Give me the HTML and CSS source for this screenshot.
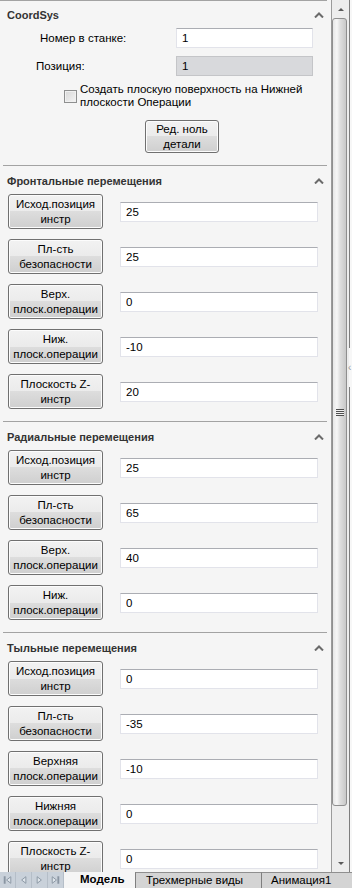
FILE: index.html
```html
<!DOCTYPE html>
<html lang="ru">
  <head>
    <meta charset="UTF-8" />
    <meta name="viewport" content="width=device-width, initial-scale=1.0" />
    <title>CoordSys</title>
    <link rel="stylesheet" href="styles.css">
  </head>
  <body>
    <div class="window">
      <div class="workspace">
        <div class="panel">
          <section class="group coord">
            <header class="group-head">
              <span>CoordSys</span>
              <svg class="chev" width="10" height="6" viewBox="0 0 10 6"><polyline points="1,5.5 5,1.5 9,5.5" /></svg>
            </header>
            <div class="field">
              <span class="field-label num">Номер в станке:</span>
              <input class="text" type="text" value="1" />
            </div>
            <div class="field">
              <span class="field-label pos">Позиция:</span>
              <input class="text" type="text" value="1" disabled />
            </div>
            <label class="check">
              <span class="box"></span>
              <span>Создать плоскую поверхность на Нижней<br />плоскости Операции</span>
            </label>
            <button type="button" class="btn zero">Ред. ноль<br />детали</button>
          </section>

          <section class="group">
            <header class="group-head">
              <span>Фронтальные перемещения</span>
              <svg class="chev" width="10" height="6" viewBox="0 0 10 6"><polyline points="1,5.5 5,1.5 9,5.5" /></svg>
            </header>
            <div class="row">
              <button type="button" class="btn">Исход.позиция<br />инстр</button>
              <input class="text" type="text" value="25" />
            </div>
            <div class="row">
              <button type="button" class="btn">Пл-сть<br />безопасности</button>
              <input class="text" type="text" value="25" />
            </div>
            <div class="row">
              <button type="button" class="btn">Верх.<br />плоск.операции</button>
              <input class="text" type="text" value="0" />
            </div>
            <div class="row">
              <button type="button" class="btn">Ниж.<br />плоск.операции</button>
              <input class="text" type="text" value="-10" />
            </div>
            <div class="row">
              <button type="button" class="btn">Плоскость Z-<br />инстр</button>
              <input class="text" type="text" value="20" />
            </div>
          </section>

          <section class="group">
            <header class="group-head">
              <span>Радиальные перемещения</span>
              <svg class="chev" width="10" height="6" viewBox="0 0 10 6"><polyline points="1,5.5 5,1.5 9,5.5" /></svg>
            </header>
            <div class="row">
              <button type="button" class="btn">Исход.позиция<br />инстр</button>
              <input class="text" type="text" value="25" />
            </div>
            <div class="row">
              <button type="button" class="btn">Пл-сть<br />безопасности</button>
              <input class="text" type="text" value="65" />
            </div>
            <div class="row">
              <button type="button" class="btn">Верх.<br />плоск.операции</button>
              <input class="text" type="text" value="40" />
            </div>
            <div class="row">
              <button type="button" class="btn">Ниж.<br />плоск.операции</button>
              <input class="text" type="text" value="0" />
            </div>
          </section>

          <section class="group">
            <header class="group-head">
              <span>Тыльные перемещения</span>
              <svg class="chev" width="10" height="6" viewBox="0 0 10 6"><polyline points="1,5.5 5,1.5 9,5.5" /></svg>
            </header>
            <div class="row">
              <button type="button" class="btn">Исход.позиция<br />инстр</button>
              <input class="text" type="text" value="0" />
            </div>
            <div class="row">
              <button type="button" class="btn">Пл-сть<br />безопасности</button>
              <input class="text" type="text" value="-35" />
            </div>
            <div class="row">
              <button type="button" class="btn">Верхняя<br />плоск.операции</button>
              <input class="text" type="text" value="-10" />
            </div>
            <div class="row">
              <button type="button" class="btn">Нижняя<br />плоск.операции</button>
              <input class="text" type="text" value="0" />
            </div>
            <div class="row">
              <button type="button" class="btn">Плоскость Z-<br />инстр</button>
              <input class="text" type="text" value="0" />
            </div>
          </section>
        </div>

        <div class="vscroll">
          <div class="arrow up"></div>
          <div class="thumb"><span class="grip"></span></div>
          <div class="track"></div>
          <div class="arrow down"></div>
        </div>

        <div class="edge">
          <div class="edge-line top"></div>
          <div class="edge-grip">&#8249;</div>
          <div class="edge-line"></div>
        </div>
      </div>

      <nav class="tabs">
        <div class="tab-nav">
          <svg width="16" height="16" viewBox="0 0 16 16"><rect x="4.5" y="4.5" width="1" height="7" /><polygon points="11.5,4.5 11.5,11.5 7,8" /></svg>
          <svg width="16" height="16" viewBox="0 0 16 16"><polygon points="10.5,4.5 10.5,11.5 6,8" /></svg>
          <svg width="16" height="16" viewBox="0 0 16 16"><polygon points="5.5,4.5 5.5,11.5 10,8" /></svg>
          <svg width="16" height="16" viewBox="0 0 16 16"><polygon points="4.5,4.5 4.5,11.5 9,8" /><rect x="10.5" y="4.5" width="1" height="7" /></svg>
        </div>
        <span class="tab active">Модель</span>
        <span class="tab wide">Трехмерные виды</span>
        <span class="tab last">Анимация1</span>
      </nav>
    </div>
  </body>
</html>
```

FILE: styles.css
```css
body {
  margin: 0;
  background: #f5f5f5;
  font-family: "Liberation Sans", Arial, sans-serif;
  font-size: 11.5px;
  color: #000;
}

.window {
  width: 352px;
  height: 888px;
  display: flex;
  flex-direction: column;
  overflow: hidden;
}

.workspace {
  height: 872px;
  display: flex;
  overflow: hidden;
}

.panel {
  width: 331px;
  flex: none;
  border-right: 1px solid #9b9b9b;
  background: #f5f5f5;
  overflow: hidden;
}

/* collapsible groups */
.group {
  margin: 0 4px 0 3px;
  padding: 7px 0 12px;
  border-top: 1px solid #a3a3a3;

  &.coord {
    margin-left: 0;
    padding: 6px 0 12px 3px;
  }
}

.group-head {
  display: flex;
  align-items: center;
  justify-content: space-between;
  height: 16px;
  padding: 0 3px 0 4px;
  font-size: 11px;
  font-weight: bold;
  color: #333;
}

.chev {
  fill: none;
  stroke: #6b6b6b;
  stroke-width: 2;
}

/* CoordSys fields */
.field {
  display: flex;
  align-items: center;
  margin-top: 8px;

  .group-head + & {
    margin-top: 5px;
  }

  .text {
    width: 137px;
    margin: 0 14px 0 auto;
  }
}

.field-label {
  &.num { padding-left: 37px; }
  &.pos { padding-left: 33px; }
}

.check {
  display: flex;
  align-items: center;
  margin-top: 7px;
  padding-left: 61px;
  line-height: 13px;
}

.box {
  width: 11px;
  height: 11px;
  margin-right: 3px;
  flex: none;
  border: 1px solid #8e8f8f;
  background: linear-gradient(135deg, #d7d7d7, #f4f4f4);
  box-shadow: inset 0 0 0 1px #f0f0f0;
}

/* movement rows */
.row {
  display: flex;
  align-items: center;
  margin: 10px 9px 0 5px;

  .group-head + & {
    margin-top: 5px;
  }

  .text {
    flex: 1;
    margin-left: 17px;
  }
}

.btn {
  width: 95px;
  height: 35px;
  padding: 0;
  flex: none;
  font: inherit;
  line-height: 15px;
  color: #000;
  border: 1px solid #707070;
  border-radius: 3px;
  background: linear-gradient(#f2f2f2 0%, #ebebeb 50%, #dddddd 50%, #cfcfcf 100%);
  box-shadow: inset 0 0 0 1px #fcfcfc;
  cursor: pointer;

  &.zero {
    display: block;
    width: 74px;
    height: 33px;
    margin: 11px 0 0 142px;
  }
}

.text {
  box-sizing: border-box;
  height: 20px;
  padding: 0 5px;
  font: inherit;
  color: #000;
  background: #fff;
  border: 1px solid #e2e3ea;
  border-top-color: #abadb3;
  outline: none;

  &:disabled {
    color: #000;
    -webkit-text-fill-color: #000;
    background: #d8d9dc;
    border-color: #c4c5c8;
  }
}

/* vertical scrollbar */
.vscroll {
  width: 17px;
  flex: none;
  display: flex;
  flex-direction: column;
  background: #ededed;
}

.arrow {
  height: 18px;
  flex: none;
  display: flex;
  align-items: center;
  justify-content: center;

  &::before {
    content: "";
    border-left: 3px solid transparent;
    border-right: 3px solid transparent;
  }

  &.up::before { border-bottom: 3px solid #5a5a5a; }
  &.down { height: 17px; }
  &.down::before { border-top: 3px solid #5a5a5a; }
}

.thumb {
  height: 788px;
  flex: none;
  box-sizing: border-box;
  margin-right: 2px;
  display: flex;
  align-items: center;
  justify-content: center;
  border: 1px solid #8f8f8f;
  border-radius: 3px;
  background: linear-gradient(to right, #e6e6e6 0%, #f6f6f6 30%, #dedede 55%, #c8c8c8 100%);
}

.grip {
  width: 8px;
  height: 7px;
  background: repeating-linear-gradient(#4e4e4e 0 1px, #f0f0f0 1px 2px);
}

.track {
  flex: 1;
}

.edge {
  width: 2px;
  flex: none;
  display: flex;
  flex-direction: column;
  border-left: 1px solid transparent;
  background: #f7f7f7;
}

.edge-line {
  flex: 1;
  margin-left: -1px;
  border-left: 1px solid #7d7d7d;

  &.top {
    flex: none;
    height: 348px;
  }
}

.edge-grip {
  height: 39px;
  flex: none;
  margin-left: -2px;
  font-size: 10px;
  line-height: 39px;
  color: #9a9a9a;
}

/* sheet tabs */
.tabs {
  height: 16px;
  display: flex;
  background: #d4d4d4;
  line-height: 15px;
}

.tab-nav {
  display: flex;
  width: 64px;
  flex: none;
  background: #c9d1da;

  svg {
    fill: #dfe5eb;
    stroke: #8995a2;
    stroke-width: 1;
    border-right: 1px solid #b5bec8;
    width: 15px;
  }
}

.tab {
  box-sizing: border-box;
  border-top: 1px solid #8f8f8f;
  border-left: 1px solid #7f7f7f;

  &.active {
    width: 71px;
    border: 0;
    padding-left: 16px;
    font-weight: bold;
    background: #f5f5f5;
  }

  &.wide {
    width: 126px;
    padding-left: 10px;
  }

  &.last {
    flex: 1;
    padding-left: 9px;
  }
}
```
